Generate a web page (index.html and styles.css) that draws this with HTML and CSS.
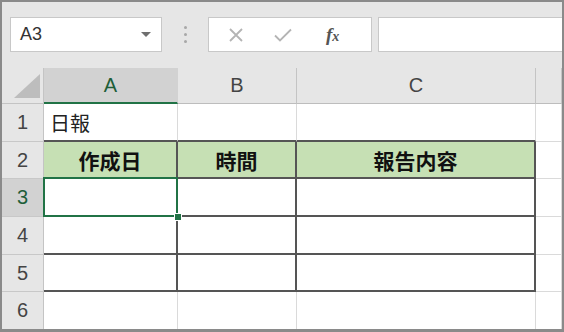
FILE: index.html
```html
<!DOCTYPE html>
<html lang="ja">
<head>
  <meta charset="UTF-8">
  <title>日報</title>
  <link rel="stylesheet" href="styles.css">
</head>
<body>
  <div class="window">
    <!-- Name box + formula bar -->
    <div class="toolbar">
      <div class="name-box">
        <span class="name-text">A3</span>
        <span class="dropdown"></span>
      </div>
      <div class="grip"><span></span><span></span><span></span></div>
      <div class="fx-box">
        <span class="fx-btn">
          <svg width="16" height="16" viewBox="0 0 16 16"><path d="M2 2 L14 14 M14 2 L2 14" stroke="#b4b4b4" stroke-width="1.8" fill="none"/></svg>
        </span>
        <span class="fx-btn">
          <svg width="20" height="16" viewBox="0 0 20 16"><path d="M2 8.5 L7 13.5 L18 2.5" stroke="#b4b4b4" stroke-width="1.8" fill="none"/></svg>
        </span>
        <span class="fx-btn fx-label">f<span class="fx-x">x</span></span>
      </div>
      <div class="formula"></div>
    </div>

    <!-- Sheet grid -->
    <div class="sheet">
      <div class="corner">
        <svg width="26" height="24" viewBox="0 0 26 24"><path d="M26 0 L26 24 L0 24 Z" fill="#bdbdbd"/></svg>
      </div>
      <div class="col-head active">A</div>
      <div class="col-head">B</div>
      <div class="col-head">C</div>
      <div class="col-head"></div>

      <div class="row-head">1</div>
      <div class="cell top-edge title">日報</div>
      <div class="cell top-edge"></div>
      <div class="cell top-edge"></div>
      <div class="cell"></div>

      <div class="row-head">2</div>
      <div class="cell boxed head">作成日</div>
      <div class="cell boxed head">時間</div>
      <div class="cell boxed head">報告内容</div>
      <div class="cell"></div>

      <div class="row-head active">3</div>
      <div class="cell boxed current">
        <div class="selection"></div>
        <div class="handle"></div>
      </div>
      <div class="cell boxed"></div>
      <div class="cell boxed"></div>
      <div class="cell"></div>

      <div class="row-head">4</div>
      <div class="cell boxed"></div>
      <div class="cell boxed"></div>
      <div class="cell boxed"></div>
      <div class="cell"></div>

      <div class="row-head">5</div>
      <div class="cell boxed"></div>
      <div class="cell boxed"></div>
      <div class="cell boxed"></div>
      <div class="cell"></div>

      <div class="row-head">6</div>
      <div class="cell"></div>
      <div class="cell"></div>
      <div class="cell"></div>
      <div class="cell"></div>
    </div>
  </div>
</body>
</html>
```
FILE: styles.css
```css
/* Global */
body {
  margin: 0;
  padding: 0;
  font-family: 'Liberation Sans', Arial, sans-serif;
  background-color: #ffffff;
}

.window {
  width: 564px;
  height: 332px;
  box-sizing: border-box;
  border: 2px solid #8a8a8a;
  border-bottom-width: 3px;
  background-color: #e6e6e6;
  overflow: hidden;
}

/* Toolbar */
.toolbar {
  height: 66px;
  box-sizing: border-box;
  padding: 15px 0 0 8px;
  display: flex;
  align-items: flex-start;
}

.name-box {
  width: 152px;
  height: 35px;
  box-sizing: border-box;
  border: 1px solid #c8c8c8;
  background-color: #fff;
  display: flex;
  align-items: center;
  justify-content: space-between;
  padding: 0 10px 0 9px;
}

.name-text {
  font-size: 18px;
  color: #333;
}

.dropdown {
  width: 0;
  height: 0;
  border-left: 5px solid transparent;
  border-right: 5px solid transparent;
  border-top: 5px solid #6f6f6f;
}

.grip {
  width: 46px;
  height: 35px;
  display: flex;
  flex-direction: column;
  align-items: center;
  justify-content: center;
  gap: 4px;
}

.grip span {
  width: 3px;
  height: 3px;
  border-radius: 50%;
  background-color: #a8a8a8;
}

.fx-box {
  width: 164px;
  height: 35px;
  box-sizing: border-box;
  border: 1px solid #c8c8c8;
  background-color: #fff;
  display: flex;
  align-items: center;
  padding-left: 19px;
  margin-right: 6px;
}

.fx-btn {
  width: 55px;
  display: flex;
  justify-content: flex-start;
  align-items: center;
}

.fx-label {
  font-family: 'Liberation Serif', serif;
  font-style: italic;
  font-weight: bold;
  font-size: 19px;
  color: #555;
  padding-left: 8px;
}

.fx-x {
  font-size: 14px;
  margin-top: 4px;
}

.formula {
  flex: 1;
  height: 35px;
  box-sizing: border-box;
  border: 1px solid #c8c8c8;
  border-right: none;
  background-color: #fff;
}

/* Sheet */
.sheet {
  display: grid;
  grid-template-columns: 42px 134px 119px 239px 1fr;
  grid-template-rows: 36px 38px 37px 38px 38px 37px 38px;
  background-color: #fff;
}

.corner {
  background-color: #e6e6e6;
  border-right: 1px solid #c4c4c4;
  border-bottom: 1px solid #c4c4c4;
  display: flex;
  align-items: flex-end;
  justify-content: flex-end;
  padding: 0 3px 5px 0;
  box-sizing: border-box;
}

.col-head {
  background-color: #e6e6e6;
  border-right: 1px solid #c4c4c4;
  border-bottom: 1px solid #bdbdbd;
  box-sizing: border-box;
  display: flex;
  align-items: center;
  justify-content: center;
  font-size: 20px;
  color: #444;
}

.col-head.active {
  background-color: #d2d2d2;
  color: #1e5e38;
  border-bottom: 2px solid #217346;
  border-right-color: #d2d2d2;
}

.row-head {
  background-color: #e6e6e6;
  border-right: 1px solid #c4c4c4;
  border-bottom: 1px solid #c8c8c8;
  box-sizing: border-box;
  display: flex;
  align-items: center;
  justify-content: center;
  font-size: 20px;
  color: #444;
}

.row-head.active {
  background-color: #d2d2d2;
  color: #1e5e38;
}

.cell {
  border-right: 1px solid #dadada;
  border-bottom: 1px solid #dadada;
  box-sizing: border-box;
  font-family: 'Noto Sans CJK JP', 'Noto Sans', sans-serif;
  color: #222;
  display: flex;
  align-items: center;
}

/* table borders */
.cell.top-edge {
  border-bottom: 2px solid #555;
}

.cell.boxed {
  border-right: 2px solid #555;
  border-bottom: 2px solid #555;
}

.cell.title {
  font-size: 20px;
  padding-left: 6px;
}

.cell.head {
  background-color: #c6e0b4;
  font-size: 21px;
  font-weight: bold;
  justify-content: center;
  color: #111;
}

/* Active cell */
.cell.current {
  position: relative;
}

.selection {
  position: absolute;
  top: -2px;
  left: -1px;
  right: -2px;
  bottom: -2px;
  border: 2px solid #217346;
}

.handle {
  position: absolute;
  right: -6px;
  bottom: -6px;
  width: 6px;
  height: 6px;
  background-color: #217346;
  border: 1px solid #fff;
  z-index: 2;
}
```
